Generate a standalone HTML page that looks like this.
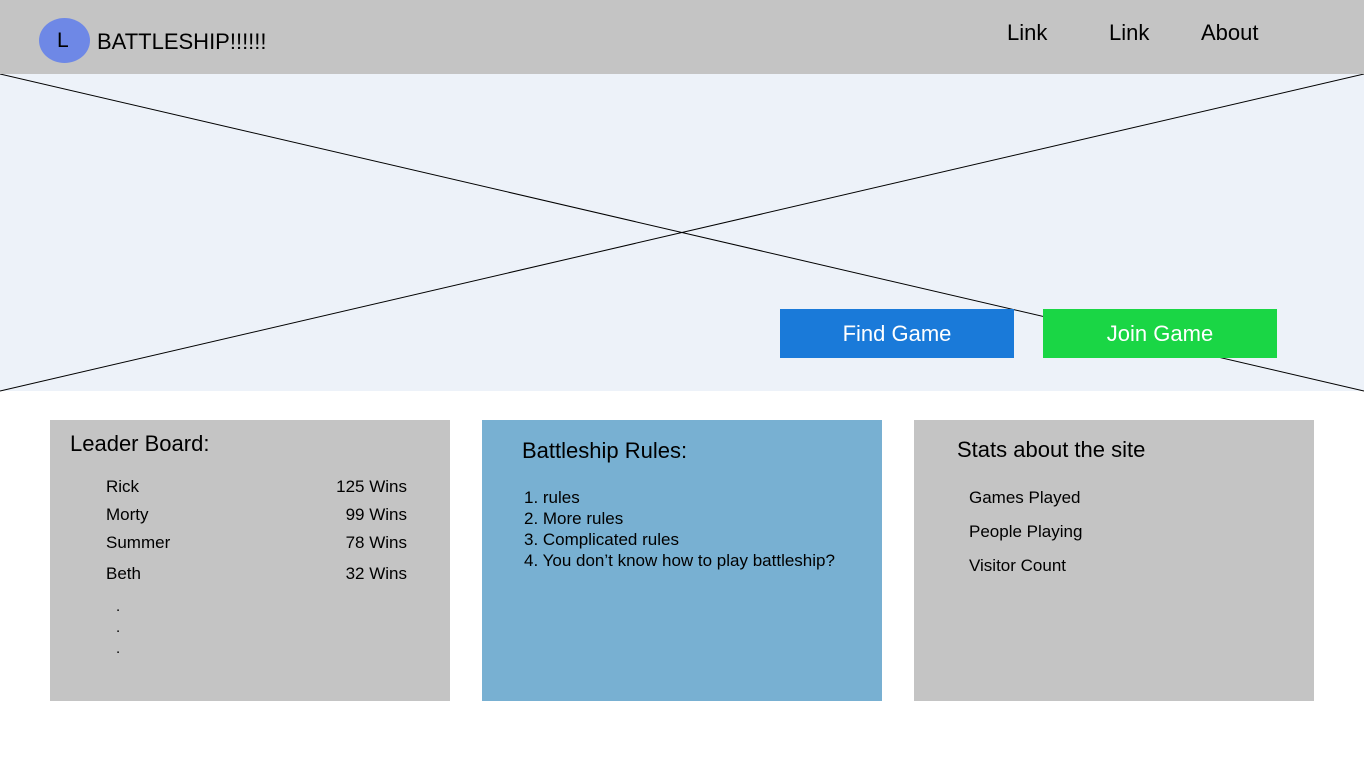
<!DOCTYPE html>
<html><head><meta charset="utf-8"><style>
*{margin:0;padding:0;box-sizing:border-box}
body{width:1364px;height:767px;background:#fff;font-family:"Liberation Sans",sans-serif;position:relative;overflow:hidden;color:#000}
.a{position:absolute;white-space:nowrap}
</style></head><body>
<div class="a" style="left:0;top:0;width:1364px;height:74px;background:#c4c4c4"></div>
<div class="a" style="left:39px;top:18px;width:51px;height:45px;border-radius:50%;background:#6e88e6"></div>
<div class="a" style="left:57px;top:29px;font-size:21px">L</div>
<div class="a" style="left:97px;top:29px;font-size:22px">BATTLESHIP!!!!!!</div>
<div class="a" style="left:1007px;top:20px;font-size:22px">Link</div>
<div class="a" style="left:1109px;top:20px;font-size:22px">Link</div>
<div class="a" style="left:1201px;top:20px;font-size:22px">About</div>
<div class="a" style="left:0;top:74px;width:1364px;height:317px;background:#edf2f9"></div>
<svg class="a" style="left:0;top:74px" width="1364" height="318"><line x1="0" y1="0" x2="1364" y2="317" stroke="#000" stroke-width="1"/><line x1="0" y1="317" x2="1364" y2="0" stroke="#000" stroke-width="1"/></svg>
<div class="a" style="left:780px;top:309px;width:234px;height:49px;background:#1a7ad9;color:#fff;font-size:22px;text-align:center;line-height:49px">Find Game</div>
<div class="a" style="left:1043px;top:309px;width:234px;height:49px;background:#1ad645;color:#fff;font-size:22px;text-align:center;line-height:49px">Join Game</div>

<div class="a" style="left:50px;top:420px;width:400px;height:281px;background:#c4c4c4"></div>
<div class="a" style="left:70px;top:431px;font-size:22px">Leader Board:</div>
<div class="a" style="left:106px;top:473px;font-size:17px;line-height:28px">Rick<br>Morty<br>Summer</div>
<div class="a" style="left:106px;top:564px;font-size:17px">Beth</div>
<div class="a" style="left:300px;top:473px;width:107px;text-align:right;font-size:17px;line-height:28px">125 Wins<br>99 Wins<br>78 Wins</div>
<div class="a" style="left:300px;top:564px;width:107px;text-align:right;font-size:17px">32 Wins</div>
<div class="a" style="left:116px;top:596px;font-size:15px;line-height:21px">.<br>.<br>.</div>

<div class="a" style="left:482px;top:420px;width:400px;height:281px;background:#78b0d2"></div>
<div class="a" style="left:522px;top:438px;font-size:22px">Battleship Rules:</div>
<div class="a" style="left:524px;top:487px;font-size:17px;line-height:21px">1. rules<br>2. More rules<br>3. Complicated rules<br>4. You don’t know how to play battleship?</div>

<div class="a" style="left:914px;top:420px;width:400px;height:281px;background:#c4c4c4"></div>
<div class="a" style="left:957px;top:437px;font-size:22px">Stats about the site</div>
<div class="a" style="left:969px;top:481px;font-size:17px;line-height:34px">Games Played<br>People Playing<br>Visitor Count</div>
</body></html>
